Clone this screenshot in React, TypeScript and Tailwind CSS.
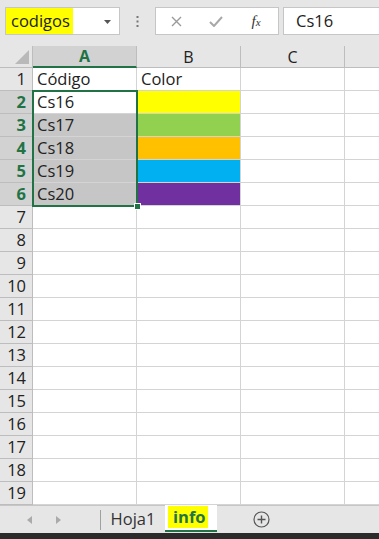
import React from "react";

const font = { fontFamily: '"Open Sans", "Noto Sans", Arial, sans-serif' };

const colors: Record<number, string> = {
  2: "bg-[#ffff00]",
  3: "bg-[#92d050]",
  4: "bg-[#ffc000]",
  5: "bg-[#00b0f0]",
  6: "bg-[#7030a0]",
};

const aVals: Record<number, string> = {
  1: "Código",
  2: "Cs16",
  3: "Cs17",
  4: "Cs18",
  5: "Cs19",
  6: "Cs20",
};

export default function App() {
  const rows = Array.from({ length: 19 }, (_, i) => i + 1);
  return (
    <div className="w-[379px] h-[539px] overflow-hidden bg-[#e6e6e6] flex flex-col text-[#222]" style={font}>
      {/* formula bar */}
      <div className="h-[46px] flex items-start pt-[7px] pl-[5px] shrink-0">
        <div className="w-[115px] h-[28px] bg-white border border-[#c6c6c6] flex items-center relative">
          <span className="bg-[#ffff00] h-[26px] flex items-center pl-[5px] pr-[3px] text-[16.5px] leading-none">codigos</span>
          <svg className="absolute right-[8px] top-[12px]" width="7" height="4" viewBox="0 0 7 4">
            <path d="M0 0 L7 0 L3.5 4 Z" fill="#555" />
          </svg>
        </div>
        <div className="w-[35px] h-[28px] flex items-center justify-center">
          <svg width="3" height="11" viewBox="0 0 3 11">
            <rect x="0.5" y="0" width="2" height="2" fill="#777" />
            <rect x="0.5" y="4.5" width="2" height="2" fill="#777" />
            <rect x="0.5" y="9" width="2" height="2" fill="#777" />
          </svg>
        </div>
        <div className="w-[124px] h-[28px] bg-white border border-[#c6c6c6] flex items-center">
          <div className="w-[40px] flex justify-center">
            <svg width="11" height="11" viewBox="0 0 11 11">
              <path d="M1 1 L10 10 M10 1 L1 10" stroke="#9a9a9a" strokeWidth="1.4" />
            </svg>
          </div>
          <div className="w-[40px] flex justify-center">
            <svg width="14" height="11" viewBox="0 0 14 11">
              <path d="M1 6 L5 10 L13 1" stroke="#a8a8a8" strokeWidth="2" fill="none" />
            </svg>
          </div>
          <div className="w-[40px] flex justify-center">
            <span className="italic text-[15px] leading-none text-[#333]" style={{ fontFamily: '"Liberation Serif", serif' }}>
              f<span className="text-[11px]">x</span>
            </span>
          </div>
        </div>
        <div className="flex-1 ml-[4px] h-[28px] bg-white border border-[#c6c6c6] border-r-0 flex items-center pl-[12px] text-[16.5px] leading-none">
          Cs16
        </div>
      </div>

      {/* sheet */}
      <div className="relative bg-white shrink-0">
        <div className="grid grid-cols-[33px_104px_104px_104px_34px]">
          {/* header row */}
          <div className="h-[22px] bg-[#e6e6e6] border-r border-b border-[#bdbdbd] relative overflow-hidden">
            <svg className="absolute right-[3px] bottom-[3px]" width="14" height="14" viewBox="0 0 14 14">
              <path d="M14 0 L14 14 L0 14 Z" fill="#b9b9b9" />
            </svg>
          </div>
          <div className="h-[22px] bg-[#d2d2d2] border-r border-[#bdbdbd] border-b-2 border-b-[#217346] flex items-center justify-center text-[16px] font-bold text-[#217346] leading-none">
            A
          </div>
          <div className="h-[22px] bg-[#e6e6e6] border-r border-b border-[#bdbdbd] flex items-center justify-center text-[16px] leading-none">
            B
          </div>
          <div className="h-[22px] bg-[#e6e6e6] border-r border-b border-[#bdbdbd] flex items-center justify-center text-[16px] leading-none">
            C
          </div>
          <div className="h-[22px] bg-[#e6e6e6] border-b border-[#bdbdbd]"></div>

          {rows.map((r) => {
            const sel = r >= 2 && r <= 6;
            return (
              <React.Fragment key={r}>
                <div
                  className={
                    sel
                      ? "h-[23px] bg-[#d2d2d2] border-r border-b border-[#bdbdbd] flex items-center justify-end pr-[6px] text-[16.5px] leading-none font-bold text-[#217346]"
                      : "h-[23px] bg-[#e6e6e6] border-r border-b border-[#bdbdbd] flex items-center justify-end pr-[6px] text-[16.5px] leading-none"
                  }
                >
                  {r}
                </div>
                <div
                  className={
                    sel && r > 2
                      ? "h-[23px] bg-[#c6c6c6] border-r border-b border-[#d4d4d4] flex items-center pl-[4px] text-[16.5px] leading-none"
                      : "h-[23px] bg-white border-r border-b border-[#d4d4d4] flex items-center pl-[4px] text-[16.5px] leading-none"
                  }
                >
                  {aVals[r] ?? ""}
                </div>
                <div
                  className={
                    "h-[23px] border-r border-b flex items-center pl-[4px] text-[16.5px] leading-none " +
                    (colors[r] ? colors[r] + " border-[#d4d4d4]" : "bg-white border-[#d4d4d4]")
                  }
                >
                  {r === 1 ? "Color" : ""}
                </div>
                <div className="h-[23px] bg-white border-r border-b border-[#d4d4d4]"></div>
                <div className="h-[23px] bg-white border-b border-[#d4d4d4]"></div>
              </React.Fragment>
            );
          })}
        </div>
        {/* selection border */}
        <div className="absolute left-[32px] top-[44px] w-[106px] h-[117px] border-2 border-[#217346] pointer-events-none">
          <div className="absolute right-[-5px] bottom-[-5px] w-[7px] h-[7px] bg-[#217346] border border-white"></div>
        </div>
      </div>

      {/* tab bar */}
      <div className="h-[28px] bg-[#e6e6e6] flex items-start shrink-0 border-t border-[#c6c6c6]">
        <div className="w-[100px] h-[27px] flex items-center">
          <svg className="ml-[27px]" width="5" height="8" viewBox="0 0 5 8">
            <path d="M5 0 L0 4 L5 8 Z" fill="#aaa" />
          </svg>
          <svg className="ml-[24px]" width="5" height="8" viewBox="0 0 5 8">
            <path d="M0 0 L5 4 L0 8 Z" fill="#aaa" />
          </svg>
        </div>
        <div className="w-px h-[20px] mt-[4px] bg-[#a0a0a0]"></div>
        <div className="w-[64px] h-[27px] flex items-center justify-center text-[16.5px] leading-none text-[#333]">Hoja1</div>
        <div className="w-[52px] h-[27px] bg-white border-b-2 border-[#217346] flex items-start pl-[3px] pt-[1px] -mt-px">
          <span className="bg-[#ffff00] h-[22px] pl-[5px] pr-[3px] flex items-center text-[16.5px] leading-none font-bold text-[#217346]">info</span>
        </div>
        <div className="w-[88px] h-[27px] flex items-center justify-center">
          <svg width="17" height="17" viewBox="0 0 17 17">
            <circle cx="8.5" cy="8.5" r="7.5" stroke="#555" strokeWidth="1.2" fill="none" />
            <path d="M8.5 4.5 V12.5 M4.5 8.5 H12.5" stroke="#555" strokeWidth="1.4" />
          </svg>
        </div>
      </div>
      <div className="flex-1 bg-[#2b2b2b]"></div>
    </div>
  );
}
